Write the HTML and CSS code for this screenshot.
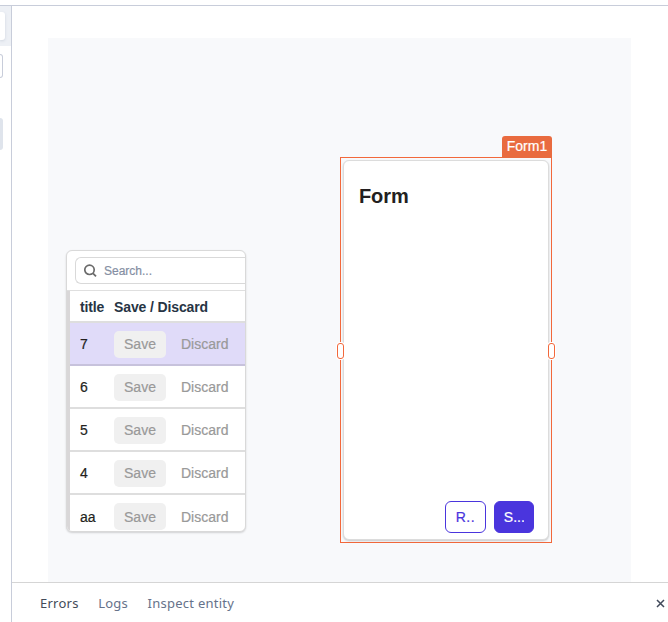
FILE: index.html
```html
<!DOCTYPE html>
<html lang="en">
<head>
<meta charset="utf-8">
<title>Editor</title>
<link rel="stylesheet" href="styles.css">
</head>
<body>
<div class="editor">
  <aside class="sidebar">
    <div class="side-tabs"><div class="side-tab"></div></div>
    <div class="side-input"></div>
    <div class="side-item"></div>
  </aside>
  <main class="workspace">
    <div class="stage">
      <div class="canvas">
        <section class="table-widget">
          <div class="search-bar">
            <div class="search">
              <svg class="search-icon" width="13" height="13" viewBox="0 0 13 13"><circle cx="5.5" cy="5.8" r="4.7"/><path d="M9 9.3l3 3"/></svg>
              <span>Search...</span>
            </div>
          </div>
          <div class="grid">
            <div class="row head"><span>title</span><span>Save / Discard</span></div>
            <div class="row selected"><span>7</span><span class="save">Save</span><span class="discard">Discard</span></div>
            <div class="row"><span>6</span><span class="save">Save</span><span class="discard">Discard</span></div>
            <div class="row"><span>5</span><span class="save">Save</span><span class="discard">Discard</span></div>
            <div class="row"><span>4</span><span class="save">Save</span><span class="discard">Discard</span></div>
            <div class="row last"><span>aa</span><span class="save">Save</span><span class="discard">Discard</span></div>
          </div>
        </section>
        <section class="form-widget">
          <div class="widget-name">Form1</div>
          <i class="handle left"></i>
          <i class="handle right"></i>
          <div class="form-card">
            <h2>Form</h2>
            <div class="actions"><button class="reset">R..</button><button class="submit">S<span class="dots">...</span></button></div>
          </div>
        </section>
      </div>
    </div>
    <footer class="debugger">
      <span class="tab active">Errors</span>
      <span class="tab logs">Logs</span>
      <span class="tab inspect">Inspect entity</span>
      <svg class="close" width="9" height="9" viewBox="0 0 9 9"><path d="M1 1l7 7M8 1l-7 7"/></svg>
    </footer>
  </main>
</div>
</body>
</html>
```
FILE: styles.css
```css
* { box-sizing: border-box; }
body { margin: 0; background: #fff; font-family: "Liberation Sans", Arial, sans-serif; font-size: 14px; overflow: hidden; }
.editor { display: flex; height: 617px; margin-top: 5px; border-top: 1px solid #c8cdda; }
.sidebar { width: 12px; flex: none; border-right: 1px solid #c8cdda; }
.side-tabs { height: 40px; padding-top: 6px; background: #edf0f5; overflow: hidden; }
.side-tab { width: 5px; height: 28px; background: #fff; border-radius: 0 3px 3px 0; box-shadow: 0 1px 3px #cfd5df; }
.side-input { width: 3px; height: 24px; margin-top: 8px; border: 1px solid #c8cdda; border-left: 0; border-radius: 0 4px 4px 0; }
.side-item { width: 3px; height: 32px; margin-top: 40px; background: #dfe4ec; border-radius: 0 3px 3px 0; }
.workspace { flex: 1; min-width: 0; display: flex; flex-direction: column; }
.stage { flex: 1; padding: 32px 37px 0 36px; }
.canvas { position: relative; height: 100%; background: #f8f9fb; }

.table-widget { position: absolute; left: 18px; top: 212px; width: 180px; height: 282px; overflow: hidden; background: #fff; border: 1px solid #d9d9d9; border-radius: 6px; box-shadow: 0 1px 2px rgba(0,0,0,.16); }
.search-bar { height: 40px; padding: 6px 0 0 8px; border-bottom: 1px solid #dfdfdf; }
.search { display: flex; align-items: center; gap: 7px; height: 27px; padding-left: 8px; border: 1px solid #d9d9d9; border-right: 0; border-radius: 6px 0 0 6px; color: #858fa3; font-size: 12px; -webkit-text-stroke: .2px; }
.search-icon { fill: none; stroke: #6b6b6b; stroke-width: 1.7; }
.grid { border-left: 3px solid #d9d7d8; }
.row { display: flex; height: 43px; padding: 8px 0 0 10px; border-bottom: 2px solid #dedede; line-height: 27px; color: #231f20; -webkit-text-stroke: .2px; }
.row > :first-child { width: 34px; flex: none; }
.head { height: 32px; padding-top: 3px; color: #273444; font-weight: bold; letter-spacing: -.12px; -webkit-text-stroke: 0; }
.selected { background: #e0dbf9; border-bottom-color: #c7c2dc; }
.last { line-height: 29px; }
.save { width: 52px; height: 27px; background: #f0f0f0; border-radius: 5px; text-align: center; color: #999; }
.discard { margin-left: 15px; color: #999; }

.form-widget { position: absolute; left: 292px; top: 119px; width: 212px; height: 386px; padding: 2px; border: 1px solid #f2683b; }
.form-card { display: flex; flex-direction: column; justify-content: space-between; height: 380px; padding: 22px 14px 6px 15px; background: #fff; border: 1px solid #dcdcdc; border-radius: 6px; box-shadow: 0 1px 2px rgba(0,0,0,.2); }
h2 { margin: 0; font-size: 20px; line-height: 26px; color: #231f20; letter-spacing: -.1px; }
.widget-name { position: absolute; right: -1px; top: -22px; width: 50px; height: 22px; background: #e96b3f; color: #fff; border-radius: 3px 3px 0 0; line-height: 21px; text-align: center; -webkit-text-stroke: .2px; }
.actions { display: flex; justify-content: flex-end; gap: 8px; }
button { height: 32px; padding: 0; border: 1px solid #4a35dd; border-radius: 6px; font: 14px/30px "Liberation Sans", Arial, sans-serif; -webkit-text-stroke: .2px; }
.reset { width: 41px; background: #fff; color: #4a35dd; letter-spacing: .6px; }
.submit { width: 40px; background: #4a35dd; color: #fff; }
.dots { display: inline-block; width: 11px; overflow: hidden; vertical-align: top; }
.handle { position: absolute; top: 185px; width: 7px; height: 16px; background: #fff; border: 1px solid #f2683b; border-radius: 3px; box-shadow: 0 0 0 1px #fff; }
.left { left: -4px; }
.right { right: -4px; }

.debugger { display: flex; align-items: center; height: 40px; padding: 2px 3px 0 28px; border-top: 1px solid #d5d5d5; background: #fff; font: 13px "Noto Sans", sans-serif; }
.tab { margin: -2px 19.5px 0 0; color: #66728a; letter-spacing: .25px; }
.active { color: #434b59; }
.close { margin-left: auto; fill: none; stroke: #41495a; stroke-width: 1.5; }
```
